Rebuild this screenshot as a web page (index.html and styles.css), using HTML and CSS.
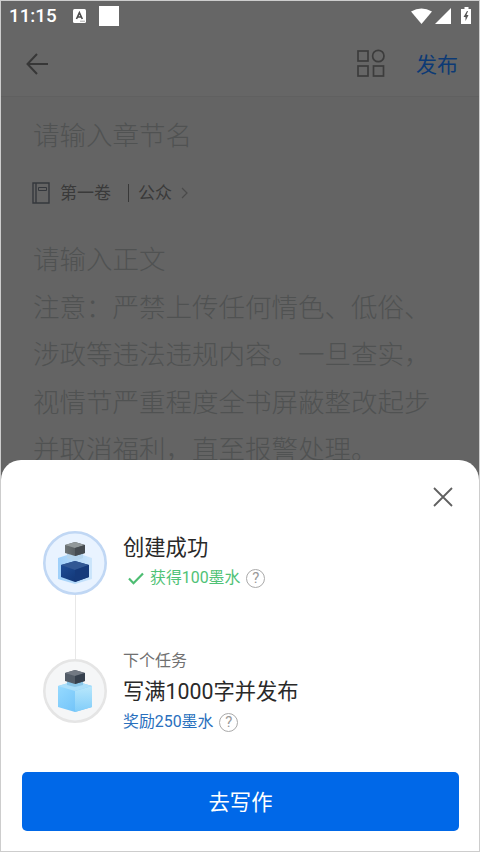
FILE: index.html
```html
<!DOCTYPE html>
<html lang="zh-CN">
<head>
<meta charset="utf-8">
<title>章节编辑</title>
<link rel="stylesheet" href="styles.css">
</head>
<body>
<div class="phone">
  <div class="status">
    <span class="clock">11:15</span>
    <svg class="app" width="13" height="14" viewBox="0 0 13 14"><rect width="13" height="14" rx="1.5" fill="#fff"/><path d="M3.5 10 6.4 3.6 9.3 10M4.6 8h3.6" fill="none" stroke="#4c4c4c" stroke-width="1.6"/><path d="M7 12.2h5" stroke="#aaa"/></svg>
    <span class="square"></span>
    <svg class="system" width="62" height="20" viewBox="0 0 62 20"><path d="M1 5.5Q11.500-.5 22 5.500L11.500 18Z" fill="#fff"/><path d="M25 18 41 2V18Z" fill="#fff"/><path d="M52 3h2.500V1h4v2H61v15H51V3Z" fill="#fff"/><path d="m57 5-3.500 6h2v4l3-6h-2l1.500-4Z" fill="#555"/></svg>
  </div>
  <header class="toolbar">
    <svg width="23" height="22" viewBox="0 0 23 22"><path d="M11 1 1.500 11 11 21M1.500 11H22" fill="none" stroke="#373737" stroke-width="2"/></svg>
    <svg class="grid-icon" width="28" height="28" viewBox="0 0 28 28"><g fill="none" stroke="#3c3c3c" stroke-width="1.700"><rect x="1" y="2" width="10" height="10"/><circle cx="21.300" cy="7" r="5.700"/><rect x="1" y="17" width="10" height="10"/><rect x="16.500" y="17" width="10" height="10"/></g></svg>
    <span class="publish">发布</span>
  </header>
  <main class="editor">
    <div class="chapter">请输入章节名</div>
    <div class="volume">
      <svg width="18" height="22" viewBox="0 0 18 22"><g fill="none" stroke="#35383d" stroke-width="1.400"><path d="M1 1h16v20H1ZM4 1v20"/><path d="M6.500 5.500h8v3h-8Z" stroke-width="1"/></g></svg>
      <span class="volume-name">第一卷</span><span class="divider"></span><span>公众</span>
      <svg class="chevron" width="7" height="12" viewBox="0 0 7 12"><path d="m1 1 5 5-5 5" fill="none" stroke="#4b4b4b" stroke-width="1.200"/></svg>
    </div>
    <div class="content">请输入正文<br>注意：严禁上传任何情色、低俗、<br>涉政等违法违规内容。一旦查实，<br>视情节严重程度全书屏蔽整改起步<br>并取消福利，直至报警处理。</div>
  </main>
  <section class="sheet">
    <svg class="close" width="20" height="20" viewBox="0 0 20 20"><path d="m1 1 18 18M19 1 1 19" fill="none" stroke="#606060" stroke-width="1.800"/></svg>
    <div class="task">
      <svg class="medal" width="64" height="64" viewBox="0 0 64 64">
        <defs>
          <linearGradient id="capA" x1="0" x2="1"><stop stop-color="#6d7476"/><stop offset="1" stop-color="#42494e"/></linearGradient>
          <linearGradient id="glassA" x1="0" x2="1"><stop stop-color="#9fd0fa"/><stop offset="1" stop-color="#cce5fb"/></linearGradient>
          <linearGradient id="ink" x1="0" x2="1" y2="1"><stop stop-color="#21519a"/><stop offset="1" stop-color="#0d2e6b"/></linearGradient>
        </defs>
        <circle cx="32" cy="32" r="30.700" fill="#e9f3ff" stroke="#c0d7f4" stroke-width="2.600"/>
        <path d="m15 27 9-3h16l9 3v21l-17 5-17-5Z" fill="url(#glassA)"/>
        <path d="m24 22 8 3 8-3v5l-8 3-8-3Z" fill="#b5d5ee"/>
        <path d="m22 14 10-3 10 3v8l-10 3-10-3Z" fill="url(#capA)"/><path d="m22 14 10-3 10 3-10 3Z" fill="#91989a"/><path d="m32 17 10-3v8l-10 3Z" fill="#454b50"/>
        <path d="m18 34 14-4 14 4v12l-14 5-14-5Z" fill="url(#ink)"/><path d="m18 34 14-4 14 4-14 5Z" fill="#315894"/><path d="m32 39 14-5v12l-14 5Z" fill="#153a7b"/>
      </svg>
      <div class="details">
        <div class="title">创建成功</div>
        <div class="reward earned"><svg class="check" width="16" height="13" viewBox="0 0 16 13"><path d="m1 6.500 4.500 4.700L15 1.500" fill="none" stroke="#4dbd72" stroke-width="2.200"/></svg><span>获得100墨水</span><span class="help">?</span></div>
      </div>
    </div>
    <div class="connector"></div>
    <div class="task next">
      <svg class="medal" width="64" height="64" viewBox="0 0 64 64">
        <defs>
          <linearGradient id="glassB" x1="0" x2="1" y2="1"><stop stop-color="#9adcff"/><stop offset="1" stop-color="#66bcf7"/></linearGradient>
          <linearGradient id="sideB" x1="0" x2="0" y2="1"><stop stop-color="#b8e7fc"/><stop offset="1" stop-color="#81cdf9"/></linearGradient>
        </defs>
        <circle cx="32" cy="32" r="30.700" fill="#f5f6f7" stroke="#e5e5e5" stroke-width="2.600"/>
        <path d="m15 27 17-5 17 5v21l-17 5-17-5Z" fill="url(#glassB)"/><path d="m15 27 17-5 17 5-17 5Z" fill="#acdffa"/><path d="m32 32 17-5v21l-17 5Z" fill="url(#sideB)"/>
        <path d="m24 21 8 3 8-3v5l-8 2-8-2Z" fill="#8bc7e9"/>
        <path d="m22 14 10-3 10 3v8l-10 3-10-3Z" fill="#535c67"/><path d="m22 14 10-3 10 3-10 3Z" fill="#727983"/><path d="m32 17 10-3v8l-10 3Z" fill="#36404d"/>
      </svg>
      <div class="details">
        <div class="label">下个任务</div>
        <div class="title">写满1000字并发布</div>
        <div class="reward"><span>奖励250墨水</span><span class="help">?</span></div>
      </div>
    </div>
    <div class="action">去写作</div>
  </section>
</div>
</body>
</html>
```
FILE: styles.css
```css
* { box-sizing: border-box; }
body { margin: 0; font-family: Roboto, "Noto Sans CJK SC", sans-serif; }
.phone { position: relative; width: 480px; height: 852px; border: 1px solid #cdcdcd; background: #646464; overflow: hidden; }
.status { display: flex; align-items: center; height: 30px; padding-left: 8px; background: #666; color: #fff; }
.clock { width: 47px; font-size: 18.8px; font-weight: 500; line-height: 30px; }
.app { margin-left: 17px; }
.square { width: 20px; height: 20px; margin-left: 13px; background: #fff; }
.system { margin: -1px 7px 0 auto; }
.toolbar { display: flex; align-items: center; height: 66px; padding: 0 21px 0 25px; border-bottom: 1px solid #606060; background: #666; }
.grid-icon { margin: -1px 31px 0 auto; }
.publish { width: 42px; margin-top: 2px; font-size: 21px; line-height: 30px; color: #0c3a75; }
.editor { padding: 21px 0 0 32px; font-weight: 300; color: #505252; }
.chapter { font-size: 26.5px; line-height: 36px; }
.volume { display: flex; align-items: center; height: 24px; margin: 27px 0 0 -1px; font-size: 17px; line-height: 24px; font-weight: 400; color: #3a3a3a; }
.volume-name { margin-left: 10px; }
.divider { width: 1px; height: 18px; margin: 0 9px 0 17px; background: #383838; }
.chevron { margin-left: 9px; }
.content { margin-top: 31px; font-size: 26.5px; line-height: 47.5px; white-space: nowrap; }
.sheet { position: absolute; inset: 459px 0 0; padding: 71px 20px 0 21px; border-radius: 20px 20px 0 0; background: #fff; }
.close { position: absolute; top: 27px; right: 26px; }
.task { display: flex; height: 64px; padding-left: 21px; }
.medal { flex: none; }
.details { margin-left: 16px; white-space: nowrap; }
.title { font-size: 21.3px; line-height: 32px; color: #292929; }
.task:not(.next) .title { padding-top: 1px; }
.reward { display: flex; align-items: center; height: 22px; font-size: 15.9px; line-height: 22px; color: #2970bd; }
.earned { margin-top: 3px; padding-left: 5px; color: #4fc276; }
.check { margin-right: 6px; }
.help { width: 19px; height: 19px; margin-left: 6px; border: 1.5px solid #aaa; border-radius: 50%; color: #999; font-size: 15px; line-height: 17px; text-align: center; }
.connector { width: 1px; height: 64px; margin-left: 53px; background: #e8e8e8; }
.next .details { margin-top: -10px; }
.label { font-size: 16px; line-height: 24px; color: #707070; }
.next .title { height: 37px; line-height: 38px; }
.next .reward { margin-top: 1px; }
.action { height: 59px; margin-top: 49px; border-radius: 5px; background: #0068e8; color: #fff; font-size: 21.3px; line-height: 61px; text-align: center; }
```
